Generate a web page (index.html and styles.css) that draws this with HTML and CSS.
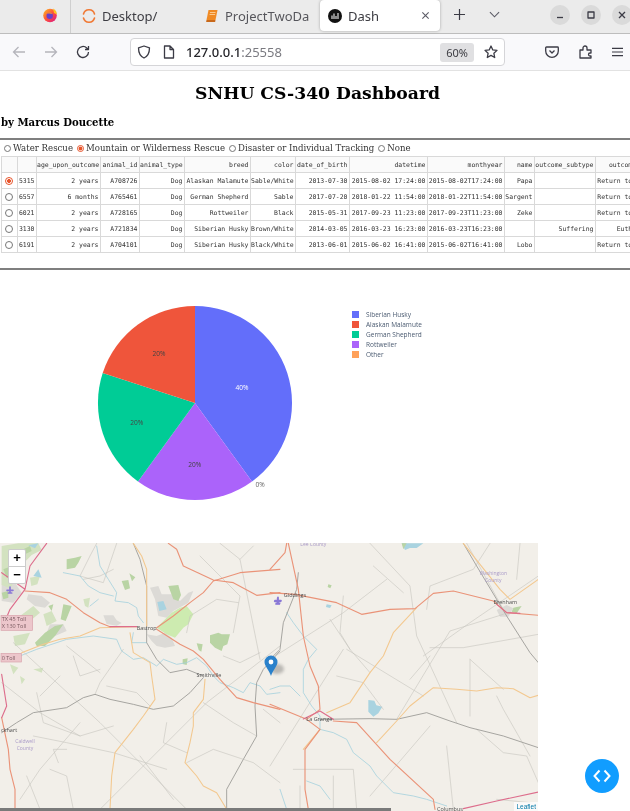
FILE: index.html
```html
<!DOCTYPE html>
<html lang="en">
<head>
<meta charset="utf-8">
<title>Dash</title>
<link rel="stylesheet" href="styles.css">
</head>
<body>
<div class="browser">
  <header class="tabbar">
    <div class="tab-pin">
      <svg class="ico16" viewBox="0 0 16 16"><defs><linearGradient id="ff" x1="0" y1="0" x2="1" y2="1"><stop offset="0" stop-color="#ffc01f"/><stop offset=".5" stop-color="#ff4f3a"/><stop offset="1" stop-color="#d6148f"/></linearGradient></defs><circle cx="8" cy="8.500" r="6.800" fill="url(#ff)"/><path d="M11 1.500c3 1.500 4 4 3.800 6L12 6z" fill="#ffc01f"/><circle cx="7.700" cy="8.700" r="3.200" fill="#6a3fc9"/><path d="M4.500 6.500c2-2 5-1.500 6 .5-2-1-4-.5-6-.5z" fill="#ff8f2a"/></svg>
    </div>
    <div class="tab tab-desktop">
      <svg class="ico14" viewBox="0 0 14 14"><path d="M1.500 5a5.700 5.700 0 0 1 11 0M12.500 9a5.700 5.700 0 0 1-11 0" class="arc"/></svg>
      <span>Desktop/</span>
    </div>
    <div class="tab tab-project">
      <svg class="ico14" viewBox="0 0 14 14"><path d="M3.500 1h9l-2 10h-9z" fill="#f08a24"/><path d="M1.500 11h9l-.4 2h-9z" fill="#c9691a"/><path d="M5 3.500h5.500M4.600 5.500h5.500" class="bookline"/></svg>
      <span class="fade">ProjectTwoDa</span>
    </div>
    <div class="tab tab-active">
      <svg class="ico14" viewBox="0 0 14 14"><circle cx="7" cy="7" r="7" fill="#111"/><path d="M4 10V6.500M6 10V4.500M8 10V7M10 10V4" class="dashbars"/></svg>
      <span class="tab-grow">Dash</span>
      <svg class="ico10" viewBox="0 0 10 10"><path d="M1.500 1.500l7 7M8.500 1.500l-7 7" class="st"/></svg>
    </div>
    <svg class="newtab" viewBox="0 0 12 12"><path d="M6 0v12M0 6h12" class="st-dark"/></svg>
    <svg class="tablist" viewBox="0 0 12 7"><path d="M1 1l5 5 5-5" class="st"/></svg>
    <div class="winctl">
      <span class="wbtn"><svg class="ico8" viewBox="0 0 8 8"><path d="M1 6.500h6" class="st-dark"/></svg></span>
      <span class="wbtn"><svg class="ico8" viewBox="0 0 8 8"><rect x="1" y="1" width="6" height="6" class="st-dark"/></svg></span>
      <span class="wbtn"><svg class="ico8" viewBox="0 0 8 8"><path d="M1 1l6 6M7 1l-6 6" class="st-dark"/></svg></span>
    </div>
  </header>
  <nav class="toolbar">
    <svg class="navico first" viewBox="0 0 14 14"><path d="M13 7H1.500M6.500 2l-5 5 5 5" class="st-light"/></svg>
    <svg class="navico second" viewBox="0 0 14 14"><path d="M1 7h11.500M7.500 2l5 5-5 5" class="st-light"/></svg>
    <svg class="navico third" viewBox="0 0 14 14"><path d="M12.500 7a5.500 5.500 0 1 1-1.700-4L12.500 4.500M12.500 1v3.500H9" class="st-dark"/></svg>
    <div class="urlbar">
      <svg class="ico14" viewBox="0 0 14 14"><path d="M7 1l5.500 1.800c0 5-1.500 8.500-5.500 10.200C3 11.300 1.500 7.800 1.500 2.800z" class="st-dark"/></svg>
      <svg class="ico14 docico" viewBox="0 0 14 14"><path d="M2.500 1h5.500l3.500 3.500V13h-9zM8 1v3.500h3.500" class="st-dark"/></svg>
      <span class="url"><b>127.0.0.1</b>:25558</span>
      <span class="zoombadge">60%</span>
      <svg class="ico14 starico" viewBox="0 0 14 14"><path d="M7 1l1.800 3.900 4.200.5-3.100 2.900.8 4.200L7 10.400l-3.700 2.100.8-4.200L1 5.400l4.200-.5z" class="st-dark"/></svg>
    </div>
    <svg class="navico pocket" viewBox="0 0 14 14"><path d="M1.500 2h11a.8.8 0 0 1 .8.800V6a6.300 6.300 0 0 1-12.600 0V2.800a.8.8 0 0 1 .8-.8zM4.500 5.500L7 8l2.500-2.500" class="st-dark"/></svg>
    <svg class="navico ext" viewBox="0 0 14 14"><path d="M1 13V5h3V3a2 2 0 0 1 4 0v2h4v3h-1a1.500 1.500 0 0 0 0 3h1v2z" class="st-dark"/></svg>
    <svg class="navico menu" viewBox="0 0 12 12"><path d="M0 2h12M0 6h12M0 10h12" class="st-dark"/></svg>
  </nav>
</div>

<main class="page">
  <h1 class="title">SNHU CS-340 Dashboard</h1>
  <h3 class="byline">by Marcus Doucette</h3>
  <hr class="rule rule-top">
  <div class="filters">
    <label class="opt"><span class="radio"></span>Water Rescue</label>
    <label class="opt"><span class="radio radio-on"></span>Mountain or Wilderness Rescue</label>
    <label class="opt"><span class="radio"></span>Disaster or Individual Tracking</label>
    <label class="opt"><span class="radio"></span>None</label>
  </div>
  <div class="tablewrap">
    <table class="data">
      <colgroup>
        <col class="c16"><col class="c19"><col class="c64"><col class="c39"><col class="c45"><col class="c66"><col class="c45b"><col class="c54"><col class="c78"><col class="c76"><col class="c30"><col class="c61"><col class="c60">
      </colgroup>
      <thead>
        <tr><th></th><th></th><th>age_upon_outcome</th><th>animal_id</th><th>animal_type</th><th>breed</th><th>color</th><th>date_of_birth</th><th>datetime</th><th>monthyear</th><th>name</th><th>outcome_subtype</th><th>outcome_type</th></tr>
      </thead>
      <tbody>
        <tr><td class="sel"><span class="radio radio-on"></span></td><td>5315</td><td>2 years</td><td>A708726</td><td>Dog</td><td>Alaskan Malamute</td><td>Sable/White</td><td>2013-07-30</td><td>2015-08-02 17:24:00</td><td>2015-08-02T17:24:00</td><td>Papa</td><td></td><td>Return to Owner</td></tr>
        <tr><td class="sel"><span class="radio"></span></td><td>6557</td><td>6 months</td><td>A765461</td><td>Dog</td><td>German Shepherd</td><td>Sable</td><td>2017-07-20</td><td>2018-01-22 11:54:00</td><td>2018-01-22T11:54:00</td><td>Sargent</td><td></td><td>Return to Owner</td></tr>
        <tr><td class="sel"><span class="radio"></span></td><td>6021</td><td>2 years</td><td>A728165</td><td>Dog</td><td>Rottweiler</td><td>Black</td><td>2015-05-31</td><td>2017-09-23 11:23:00</td><td>2017-09-23T11:23:00</td><td>Zeke</td><td></td><td>Return to Owner</td></tr>
        <tr><td class="sel"><span class="radio"></span></td><td>3130</td><td>2 years</td><td>A721834</td><td>Dog</td><td>Siberian Husky</td><td>Brown/White</td><td>2014-03-05</td><td>2016-03-23 16:23:00</td><td>2016-03-23T16:23:00</td><td></td><td>Suffering</td><td>Euthanasia</td></tr>
        <tr><td class="sel"><span class="radio"></span></td><td>6191</td><td>2 years</td><td>A704101</td><td>Dog</td><td>Siberian Husky</td><td>Black/White</td><td>2013-06-01</td><td>2015-06-02 16:41:00</td><td>2015-06-02T16:41:00</td><td>Lobo</td><td></td><td>Return to Owner</td></tr>
      </tbody>
    </table>
  </div>
  <hr class="rule rule-bottom">

  <section class="chart">
    <svg class="pie" viewBox="0 0 340 220">
      <path d="M195 112V15A97 97 0 0 1 252 190.500z" fill="#636efa"/>
      <path d="M195 112L252 190.500A97 97 0 0 1 138 190.500z" fill="#ab63fa"/>
      <path d="M195 112L138 190.500A97 97 0 0 1 102.700 82z" fill="#00cc96"/>
      <path d="M195 112L102.700 82A97 97 0 0 1 195 15z" fill="#ef553b"/>
      <text x="242" y="98.500" class="pl pl-w">40%</text>
      <text x="159" y="64.800" class="pl">20%</text>
      <text x="136.700" y="133.800" class="pl">20%</text>
      <text x="194.700" y="175.800" class="pl">20%</text>
      <text x="260" y="196.300" class="pl pl-g">0%</text>
    </svg>
    <ul class="legend">
      <li><span class="sw sw1"></span>Siberian Husky</li>
      <li><span class="sw sw2"></span>Alaskan Malamute</li>
      <li><span class="sw sw3"></span>German Shepherd</li>
      <li><span class="sw sw4"></span>Rottweiler</li>
      <li><span class="sw sw5"></span>Other</li>
    </ul>
  </section>

  <section class="map">
    <svg class="mapsvg" viewBox="0 0 538 270">
      <g transform="translate(0,-7) scale(.33333)">
        <path class="urban" d="M450 155l25-5 10 25 30 0 25 20 25-25 15-5-15 35-45 25-20 20-25-5-10-50zM440 295l30 5 25-10 20 15 10 25-30 5-25-5-15-15z"/>
        <path class="urban" d="M310 238l30 0 10 15 15 8-15 8-30-5z"/>
        <path class="urban" d="M85 175l40 5 25 20-15 15-30-5-25-20zM150 265l40 0 10 20-35 15-25-10zM5 120l40 20 20 30-25 30-35-5z"/>
        <path class="green-br" d="M470 275l45-45 25-15 20-5 20 25-15 30-15 10-25 30-25-10z"/>
        <path class="green-lt" d="M5 30l50-8 60 0 10 20-30 15-20 20-25 50-20 30-25-10zM130 235l25-10 15 30-30 15zM30 385l25 10-15 20zM90 125l30-5-8 25-18 5zM250 190l20-5-5 30-10-5zM100 400l30-5-5 15zM60 420l15 10-10 15zM60 240l40-30 20 20-30 25zM40 300l50-10-15 35-30 5z"/>
        <path class="green" d="M505 150l30-3 8 30-8 18-15-5zM630 298l25-8 10 5 25 0-8 30-12 5-5 15-20-10-15-15zM200 70l25-5 20-5-10 20-10 15-25 5zM190 205l25 5-18 45-15-5zM365 135l20-3 5 25-15 5zM105 320l30-30 30-20 25-5-25 35-20 20-10 10-25 0zM388 112l18 12-10 12zM548 370l15-3-3 20-12-3zM590 322l18 3-4 22-8-5zM10 100l25-10 5 20-20 15zM70 40l20-10 5 15-20 10zM5 170l20-5 0 20-15 5zM145 210l15-5-5 20z"/>
        <path class="water" d="M472 198l18-3 10 25-22 5zM100 120l15-20 10 25zM85 28l30-6-10 15z"/>
        <path class="thin" d="M40 320L300 560L560 820M840 330L620 500L300 820M350 22L310 140L240 120L270 60L290 22M660 22L720 70L780 370M5 440L120 530L240 600M110 470L130 560L240 600L340 570M100 600L200 620L340 650L500 700M60 790L120 700L240 560M560 680L640 640L760 680L840 740M370 340L300 440L285 475M790 520L840 560M200 330L300 410M120 480L180 420M600 60L720 180L700 290M720 70L760 30M175 680L160 640L200 640M300 400L240 420L220 360M320 450L410 470L450 510M500 560L490 620L560 650M560 290L570 240L650 190L715 200M670 360L720 380L780 350M610 500L700 560L770 600M150 700L200 720L220 820M80 720L120 820M420 660L520 790M250 130L300 120L340 100"/>
        <path class="river" d="M290 30L300 90L325 130L350 170L345 195L385 200L410 215L415 240L430 260M60 360L110 340L200 310L280 300L350 310L365 345L400 370L430 365L470 390L490 370L530 385L560 380L590 365L620 390L640 420L660 440L700 455L730 470L750 440L780 450L800 475L840 470M400 290L395 320L440 320M190 110L240 120L265 150L300 170L340 180M295 190L270 210"/>
        <path class="grey" d="M400 22L420 70L440 150L440 320L470 370L510 410L560 400L610 420M5 590L50 560L100 530L200 515L250 485L285 475L330 490L400 505L460 520L520 510L570 470L610 425M840 345L790 400L770 440L765 510L770 600L730 670L680 760L680 820"/>
        <path class="sec" d="M400 22L425 60L440 100L440 270M390 290L400 350L450 380L455 420L465 490L430 540L400 580L345 650L335 720L330 820M615 430L610 490L580 530L580 570L570 620L555 680L590 720L610 750L650 770L680 820M65 350L130 325L180 310L240 300L300 275L410 272"/>
        <path class="trunk" d="M75 165L150 170L200 190L250 230L300 260L330 272M470 280L540 325L580 345L610 370L660 430L710 485L760 500L840 520M470 275L520 240L570 200L610 170L640 135L720 110L840 100M505 22L530 40L550 90L640 132L700 140L770 178L840 170M5 545L25 640L30 700L45 760L45 820"/>
        <path class="motor" d="M140 22L90 90L75 160L30 220L5 280M5 415L20 510L5 545M5 110L75 160M330 272L410 272"/>
        <g class="plane"><path d="M30 153v18M21 163h18M25 171h10"/><path d="M833 186v18M824 196h18M828 204h10"/></g>
        <text x="440" y="282" class="ml mid">Bastrop</text>
        <text x="627" y="423" class="ml mid">Smithville</text>
        <text x="3" y="587" class="ml">ckhart</text>
        <text x="75" y="621" class="ml mid county">Caldwell</text>
        <text x="75" y="641" class="ml mid county">County</text>
        <rect x="3" y="238" width="95" height="45" class="shield"/>
        <text x="5" y="256" class="ml toll">TX 45 Toll</text>
        <text x="5" y="275" class="ml toll">X 130 Toll</text>
        <rect x="3" y="352" width="61" height="26" class="shield"/>
        <text x="5" y="371" class="ml toll">0 Toll</text>
      </g>
      <g transform="translate(270,-7) scale(.33333)">
        <path class="water" d="M295 492l18 2 6 14 18 4-12 20-15 10-15-15z"/>
        <path class="water" d="M395 22h65l-20 14-20 0-15 6zM170 205l15 3-5 8-12-3z"/>
        <path class="green" d="M175 145l10 3-4 9-8-4zM395 22l15 0-10 18zM730 215l25-5-15 22-15-5z"/>
        <path class="urban" d="M680 222l30-15 20 10-15 25-25 0z"/>
        <path class="thin" d="M300 22L420 150L440 300L560 560M0 370L220 230L350 130M460 360L600 260L805 120M380 550L540 285L700 235M600 370L700 460M230 340L460 480M180 250L240 340L300 410M805 295L580 335L480 335M420 430L480 360M600 370L600 540M0 690L220 340M70 700L250 700L260 820M90 750L90 820M190 720L190 820M660 22L610 100L480 150L470 220M590 22L700 220M750 22L740 130M780 800L680 790M530 630L550 820M300 780L480 570M200 420L280 440L340 520M310 90L400 170M220 180L210 290L240 340M680 480L700 520L780 660M620 580L700 650L770 660L805 740"/>
        <path class="river" d="M50 230L70 260L100 300L140 340L115 370L100 400L100 470L125 510L150 540L150 580L190 590L230 610L250 650L300 690L320 720L370 770L430 780L470 790L530 810M0 460L30 450L60 450L90 480M110 735L150 750L180 790M30 760L50 820"/>
        <path class="grey" d="M85 110L80 160L40 260L30 340L0 370M150 550L300 548L380 550L470 530L540 555L600 575L700 600L805 635M580 22L620 90L710 240L780 350L805 380"/>
        <path class="sec" d="M580 22L630 85L690 160L720 190L805 130M170 530L240 500L300 410L340 360L370 290L440 215M320 620L380 555L420 510L490 455L560 460L620 465L680 455L730 458L780 485L805 478M150 580L100 640"/>
        <path class="trunk" d="M0 100L45 50L50 22M55 22L85 160L100 300L120 390L145 450L150 520L110 550L0 505M0 170L75 175L200 200L275 235L360 220L435 218L490 172L550 165L670 195L710 230L805 238M110 550L150 580L105 640L105 760L115 820M190 555L260 560L360 670L490 790L495 820"/>
        <path class="motor" d="M100 549L150 525L190 550M680 205L710 230L750 232M580 818L680 795L805 768"/>
        <path class="plane-one" d="M24 184v18M15 194h18M19 202h10"/>
        <text x="75" y="182" class="ml mid">Giddings</text>
        <text x="706" y="204" class="ml mid">Brenham</text>
        <text x="148" y="554" class="ml mid">La Grange</text>
        <text x="540" y="826" class="ml mid">Columbus</text>
        <text x="130" y="30" class="ml mid county">Lee County</text>
        <text x="670" y="118" class="ml mid county">Washington</text>
        <text x="670" y="138" class="ml mid county">County</text>
      </g>
    </svg>
    <div class="zoomctl"><span class="zc zc-top">+</span><span class="zc">−</span></div>
    <svg class="marker" viewBox="0 0 28 22">
      <ellipse cx="13" cy="14" rx="7" ry="5" class="mshadow"/>
      <path d="M7 21C5 15 .5 11 .5 7a6.500 6.500 0 0 1 13 0C13.500 11 9 15 7 21z" fill="#2a81cb"/>
      <circle cx="7" cy="7" r="2.400" fill="#fff"/>
    </svg>
    <a class="attrib">Leaflet</a>
  </section>
</main>

<div class="scrollthumb"></div>
<button class="debug" aria-label="Toggle debug"><svg viewBox="0 0 18 14"><path d="M6.500 1.500L1.500 7l5 5.500M11.500 1.500l5 5.500-5 5.500" class="chev"/></svg></button>
</body>
</html>
```
FILE: styles.css
```css
html, body { margin: 0; padding: 0; height: 811px; overflow: hidden; background: #fff; }
body { position: relative; width: 630px; font-family: "DejaVu Serif", serif; filter: blur(.35px); }

.browser { font-family: "Noto Sans", sans-serif; color: #3c3c42; }
svg { display: block; }
.tabbar { height: 33px; background: #ebebeb; display: flex; align-items: flex-start; border-bottom: 1px solid #bdbdbd; }
.tab-pin { width: 71px; height: 33px; box-sizing: border-box; border-right: 1px solid #cfcfcf; display: flex; align-items: center; justify-content: flex-end; padding: 0 12px 3px 0; }
.ico16 { width: 16px; height: 16px; }
.ico14 { width: 14px; height: 14px; flex: none; }
.ico10 { width: 9px; height: 9px; flex: none; }
.ico8 { width: 8px; height: 8px; }
.tab { display: flex; align-items: center; height: 31px; font-size: 13px; box-sizing: border-box; gap: 6px; }
.tab-desktop { width: 124px; padding-left: 11px; }
.tab-project { width: 125px; padding-left: 10px; overflow: hidden; white-space: nowrap; }
.fade { opacity: .85; }
.tab-active { width: 120px; background: #fff; border-radius: 4px; box-shadow: 0 0 3px rgba(0,0,0,.3); padding: 0 10px 0 8px; }
.tab-grow { flex: 1; }
.newtab { width: 11px; height: 11px; margin: 9px 0 0 14px; }
.tablist { width: 11px; height: 7px; margin: 11px 0 0 24px; }
.winctl { display: flex; gap: 11px; margin: 5px 0 0 auto; transform: translateX(2px); }
.wbtn { width: 20px; height: 20px; border-radius: 50%; background: #dadada; display: flex; align-items: center; justify-content: center; }
.arc { fill: none; stroke: #f07a36; stroke-width: 1.600; stroke-linecap: round; }
.bookline { stroke: #ffd9a8; stroke-width: .8; fill: none; }
.dashbars { stroke: #ddd; stroke-width: 1.200; fill: none; }
.st { fill: none; stroke: #5b5b66; stroke-width: 1.200; }
.st-dark { fill: none; stroke: #3b3b45; stroke-width: 1.300; stroke-linejoin: round; }
.st-light { fill: none; stroke: #b5b5bb; stroke-width: 1.300; }

.toolbar { height: 36px; background: #f9f9fb; display: flex; align-items: center; border-bottom: 1px solid #e2e2e2; }
.navico { width: 14px; height: 14px; flex: none; }
.first { margin-left: 12px; }
.second { margin-left: 18px; }
.third { margin-left: 18px; }
.urlbar { margin-left: 40px; width: 375px; height: 28px; box-sizing: border-box; background: #fff; border: 1px solid #d5d5d8; border-radius: 4px; display: flex; align-items: center; padding: 0 6px 0 6px; }
.docico { margin-left: 11px; }
.url { margin-left: 10px; font-size: 13px; color: #7a7a80; flex: 1; }
.url b { font-weight: 500; color: #26262b; }
.zoombadge { width: 34px; height: 19px; background: #e0e0e2; border-radius: 3px; font-size: 11px; line-height: 19px; text-align: center; }
.starico { margin-left: 10px; }
.pocket { margin-left: 40px; }
.ext { margin-left: 20px; }
.menu { width: 11px; margin-left: 19px; }

.page { color: #000; }
.title { margin: 0; padding: 12px 0 0 5px; font-size: 17.200px; line-height: 21px; text-align: center; font-weight: 700; }
.byline { margin: 12px 0 0; padding-left: 1px; font-size: 10.100px; line-height: 14px; font-weight: 700; }
.rule { height: 0; margin: 0; border: 0; border-top: 2px solid #7f7f7f; }
.rule-top { margin-top: 8px; }
.rule-bottom { margin-top: 15px; }
.filters { display: flex; height: 16px; align-items: center; padding-left: 4px; font-size: 8.600px; color: #333; white-space: nowrap; gap: 4px; }
.opt { display: flex; align-items: center; gap: 2px; }
.radio { display: inline-block; width: 7px; height: 7px; box-sizing: border-box; border: 1px solid #777; border-radius: 50%; background: #fff; }
.radio-on { border-color: #e8552c; background: radial-gradient(circle, #e8552c 0 1.700px, #fff 2.200px); }
.sel .radio { width: 8px; height: 8px; }

.tablewrap { width: 630px; overflow: hidden; }
.data { border-collapse: collapse; table-layout: fixed; width: 656px; margin-left: 1px; font-family: "DejaVu Sans Mono", monospace; font-size: 6.450px; color: #333; }
.data th, .data td { height: 16px; padding: 0 1.500px 0 0; box-sizing: border-box; border: 1px solid #d9d9d9; text-align: right; white-space: nowrap; overflow: hidden; font-weight: 400; }
.data th { background: #fafafa; }
.data .sel { text-align: left; padding: 2px 0 0 3px; }
.c16 { width: 16px; } .c19 { width: 19px; } .c64 { width: 64px; } .c39 { width: 39px; } .c45 { width: 45px; }
.c66 { width: 66px; } .c45b { width: 45px; } .c54 { width: 54px; } .c78 { width: 78px; } .c76 { width: 77px; }
.c30 { width: 30px; } .c61 { width: 61px; } .c60 { width: 62px; }

.chart { height: 220px; padding-top: 21px; padding-bottom: 32px; display: flex; }
.pie { width: 340px; height: 220px; flex: none; }
.pl { font-family: "Open Sans", sans-serif; font-size: 6.600px; fill: #444; text-anchor: middle; }
.pl-w { fill: #fff; }
.pl-g { fill: #666; }
.legend { list-style: none; margin: 18.500px 0 0 12px; padding: 0; font-family: "Open Sans", sans-serif; font-size: 6.500px; color: #4a5a70; }
.legend li { display: flex; align-items: center; height: 10px; gap: 7.500px; white-space: nowrap; }
.sw { width: 6.500px; height: 6.500px; flex: none; }
.sw1 { background: #636efa; } .sw2 { background: #ef553b; } .sw3 { background: #00cc96; } .sw4 { background: #ab63fa; } .sw5 { background: #ffa15a; }

.map { position: relative; width: 538px; height: 269px; background: #f2efe9; overflow: hidden; }
.mapsvg { width: 538px; height: 270px; }
.mapsvg path { fill: none; stroke-linejoin: round; stroke-linecap: round; }
.mapsvg .urban { fill: #dcdad6; }
.mapsvg .green { fill: #b9d4a4; }
.mapsvg .green-lt { fill: #d3e2c0; }
.mapsvg .green-br { fill: #cdebb0; }
.mapsvg .water { fill: #a9d3e0; }
.thin { stroke: #c6c4be; stroke-width: 1.800; }
.river { stroke: #a3d1dd; stroke-width: 2.400; }
.grey { stroke: #a09f9b; stroke-width: 2.800; }
.sec { stroke: #f3c88f; stroke-width: 3.200; }
.trunk { stroke: #ea9378; stroke-width: 3.400; }
.motor { stroke: #dd6d8c; stroke-width: 3.400; }
.plane path, .plane-one { stroke: #8a78d6; stroke-width: 5; }
.ml { font-family: "Open Sans", sans-serif; font-size: 16.500px; fill: #4d4d4d; }
.mid { text-anchor: middle; }
.county { fill: #a99ac8; font-size: 15px; }
.toll { fill: #7a5a60; }
.shield { fill: #ecc6cb; stroke: #d9a2ac; stroke-width: 2; }
.zoomctl { position: absolute; left: 8px; top: 6px; width: 16px; background: #fff; border: 1px solid rgba(0,0,0,.2); border-radius: 2px; display: flex; flex-direction: column; font: 700 13px/16px "Liberation Sans", sans-serif; text-align: center; color: #000; }
.zc { height: 16px; }
.zc-top { border-bottom: 1px solid #ccc; }
.marker { position: absolute; left: 264px; top: 112px; width: 28px; height: 22px; }
.mshadow { fill: rgba(60,60,60,.3); filter: blur(1.500px); }
.attrib { position: absolute; right: 0; bottom: 1px; padding: 0 2px; background: rgba(255,255,255,.7); font: 6.500px/9px "Liberation Sans", sans-serif; color: #0078a8; }

.scrollthumb { position: absolute; left: 0; bottom: 0; width: 391px; height: 3px; background: #7a7a7a; }
.debug { position: absolute; left: 585px; top: 759px; width: 34px; height: 34px; padding: 0; border: 0; border-radius: 50%; background: #119dff; display: flex; align-items: center; justify-content: center; }
.debug svg { width: 18px; height: 14px; }
.chev { fill: none; stroke: #fff; stroke-width: 2; }
```
